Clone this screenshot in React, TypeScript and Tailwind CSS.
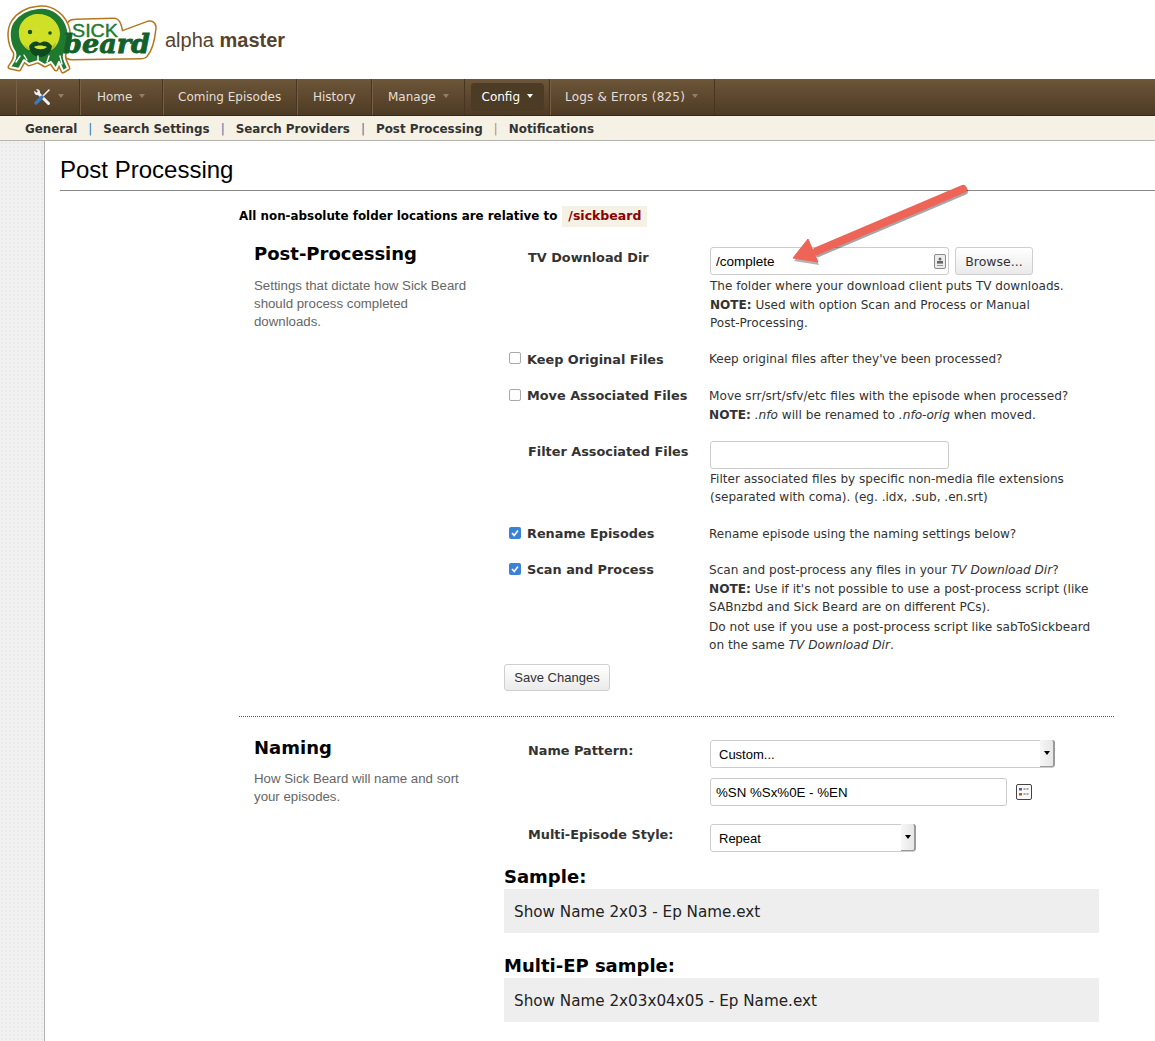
import React from "react";

const sans = "font-['DejaVu_Sans',Verdana,sans-serif]";

function Logo() {
  const head = "M38 6 C52 4 65 14 68 28 C70 38 68 46 65 50 C62 54 65 60 68 66 L63 69 L59 60 L56 67 L51 60 L45 63 L38 59 L29 62 L24 58 L19 67 L10 65 C13 60 17 56 15 50 C9 42 8 28 13 20 C19 11 28 7 38 6 Z";
  const band = "M66 30 C67 22 70 19 75 19 L114 18 C118 18 120 22 121 31 L148 21 C153 20 155 23 154 28 C153 38 150 48 146 53 C145 55 143 55 140 55 L72 56 C66 56 61 50 62 42 C62 36 64 33 66 30 Z";
  return (
    <svg width="160" height="76" viewBox="0 0 160 76" className="block shrink-0">
      <path d={band} fill="#fff" stroke="#b5771e" strokeWidth="5" strokeLinejoin="round" />
      <path d={band} fill="#fff" stroke="#fff" strokeWidth="2" strokeLinejoin="round" />
      <path d={head} fill="#fff" stroke="#b5771e" strokeWidth="5" strokeLinejoin="round" />
      <path d={head} fill="#1f7a30" stroke="#fff" strokeWidth="2" strokeLinejoin="round" />
      <path d="M19 32 C18 20 28 12 38 12 C50 12 59 20 60 31 C60 38 57 44 53 47 L27 47 C22 43 19 38 19 32 Z" fill="#cfe026" />
      <path d="M24 42 C30 50 50 50 56 40 C55 45 54 46 52 48 L28 48 C26 46 25 44 24 42 Z" fill="#a9c41e" />
      <circle cx="30" cy="30" r="2.2" fill="#14501f" />
      <circle cx="50" cy="31" r="1.8" fill="#14501f" />
      <path d="M29 44 C33 38 37 39 40 41 C43 39 48 38 52 44 C51 51 46 55 40 55 C34 55 30 51 29 44 Z" fill="#0f4a1e" />
      <path d="M34 45 C37 43 43 43 47 45 C44 48 37 48 34 45 Z" fill="#d8e63a" />
      <path d="M27 58 L24 53 M38 59 L38 54 M47 60 L49 54 M16 60 L20 54 M62 62 L60 54" stroke="#fff" strokeWidth="1.4" strokeLinecap="round" />
      <text x="72" y="35" fontFamily="'Liberation Sans',sans-serif" fontSize="18" fill="#1f7a30" stroke="#1f7a30" strokeWidth="0.4" textLength="46" lengthAdjust="spacingAndGlyphs">SICK</text>
      <text x="63" y="51" fontFamily="'DejaVu Serif',serif" fontStyle="italic" fontWeight="700" fontSize="26" fill="#14602b" stroke="#14602b" strokeWidth="0.8" textLength="87" lengthAdjust="spacingAndGlyphs">beard</text>
    </svg>
  );
}

function Tools() {
  return (
    <svg width="18" height="18" viewBox="0 0 18 18" className="block">
      <path d="M5 5 L15.5 15.5" stroke="#eef1f4" strokeWidth="3" strokeLinecap="round" />
      <path d="M1.5 2.8 L3.8 5 L5.2 3.8 L3 1.4 C5.5 0.4 7.8 2.4 7 5.2 L5.2 7 C2.6 7.8 0.6 5.4 1.5 2.8 Z" fill="#eef1f4" />
      <path d="M16 2 L10 8" stroke="#eef1f4" strokeWidth="1.6" strokeLinecap="round" />
      <path d="M9 9 L3 15" stroke="#3f78bb" strokeWidth="3.4" strokeLinecap="round" />
    </svg>
  );
}

function Caret({ light }: { light?: boolean }) {
  return <span className={`inline-block ml-[7px] mb-[3px] border-x-[3.5px] border-x-transparent border-t-[4px] ${light ? "border-t-white" : "border-t-[#8f7f6c]"}`} />;
}

function NavItem({ children, cls, caret }: { children: React.ReactNode; cls: string; caret?: boolean }) {
  return (
    <div className={`${cls} h-full flex items-center justify-start border-r border-r-[#463520] border-l border-l-[#765f43] shrink-0 text-[#e3dfd6]`}>
      {children}
      {caret && <Caret />}
    </div>
  );
}

function Sep({ c }: { c: string }) {
  return <span className={`mx-[11px] font-normal ${c}`}>|</span>;
}

function Stripe() {
  return <aside className="w-[45px] shrink-0 bg-[#f1f1f1] bg-[radial-gradient(#e9e9e9_1px,transparent_1px)] bg-[length:4px_4px] border-r border-r-[#b4b4b4]" />;
}

function Label({ children }: { children: React.ReactNode }) {
  return <div className="w-[206px] shrink-0 pl-[24px] font-bold text-[12.85px] text-[#333] leading-[19px]">{children}</div>;
}

function L19({ children }: { children: React.ReactNode }) {
  return <span className="block h-[19px] leading-[19px]">{children}</span>;
}

function L18({ children }: { children: React.ReactNode }) {
  return <span className="block h-[18px] leading-[18px]">{children}</span>;
}

function L20({ children }: { children: React.ReactNode }) {
  return <span className="block h-[20px] leading-[22px]">{children}</span>;
}

function CheckRow({ label, checked, children, cls, labelCls = "" }: { label: string; checked?: boolean; children: React.ReactNode; cls: string; labelCls?: string }) {
  return (
    <div className={`flex ${cls}`}>
      <div className="w-[205px] shrink-0 pl-[5px] flex items-start font-bold text-[12.85px] text-[#333] leading-[19px]">
        {checked ? (
          <span className="w-[12px] h-[12px] mt-[3px] rounded-[2px] bg-[#3b82d6] flex items-center justify-center">
            <svg width="10" height="10" viewBox="0 0 10 10"><path d="M2 5 L4.2 7.4 L8 2.6" stroke="#fff" strokeWidth="1.6" fill="none" /></svg>
          </span>
        ) : (
          <span className="w-[12px] h-[12px] mt-[3px] rounded-[2px] bg-white border border-[#a9a9a9]" />
        )}
        <span className={`ml-[6px] whitespace-nowrap ${labelCls}`}>{label}</span>
      </div>
      <div className="flex-1">{children}</div>
    </div>
  );
}

function TextBox({ value, cls }: { value: string; cls: string }) {
  return (
    <input
      readOnly
      value={value}
      className={`${cls} h-[28px] block bg-white border border-[#cccccc] rounded-[3px] px-[5px] text-black font-['Liberation_Sans',Arial,sans-serif] outline-none`}
    />
  );
}

function Select({ value, w }: { value: string; w: string }) {
  return (
    <div className={`relative ${w} h-[28px]`}>
      <select value={value} onChange={() => {}} className="appearance-none w-full h-full bg-white border border-[#cccccc] rounded-[3px] pl-[8px] pt-[2px] text-[13px] text-black font-['Liberation_Sans',Arial,sans-serif] outline-none">
        <option>{value}</option>
      </select>
      <span className="absolute right-0 top-0 w-[15px] h-[27px] bg-gradient-to-r from-[#f6f6f6] to-[#e6e6e6] border-r-2 border-b border-[#9a9a9a] rounded-r-[3px] flex items-center justify-center">
        <span className="border-x-[3.5px] border-x-transparent border-t-[4px] border-t-black" />
      </span>
    </div>
  );
}

function SectionHead({ title, lines, titleCls, pCls }: { title: string; lines: string[]; titleCls: string; pCls: string }) {
  return (
    <div className="w-[265px] shrink-0 pl-[15px]">
      <h2 className={`font-bold text-[18px] text-black leading-[22px] ${titleCls}`}>{title}</h2>
      <p className={`text-[13.25px] leading-[18px] text-[#666] font-['Liberation_Sans',Arial,sans-serif] whitespace-nowrap ${pCls}`}>
        {lines.map((l) => <span key={l} className="block">{l}</span>)}
      </p>
    </div>
  );
}

function Sample({ heading, text }: { heading: string; text: string }) {
  return (
    <div>
      <h3 className="font-bold text-[18px] leading-[22px] text-black">{heading}</h3>
      <div className="mt-[1px] w-[595px] h-[44px] bg-[#eeeeee] pl-[10px] pt-[3px] flex items-center text-[15.2px] text-[#222]">{text}</div>
    </div>
  );
}

export default function App() {
  const desc = "pt-[1px] text-[12.05px] text-[#333] whitespace-nowrap";
  const descWide = "pt-[1px] text-[12.13px] text-[#333] whitespace-nowrap";
  return (
    <div className={`relative w-[1155px] h-[1041px] overflow-hidden bg-white ${sans}`}>
      <header className="h-[79px] flex items-center">
        <Logo />
        <div className="ml-[5px] mt-[1px] text-[20px] text-[#57432c] font-['Liberation_Sans',Arial,sans-serif]">
          alpha <b className="font-bold">master</b>
        </div>
      </header>

      <nav className="h-[37px] pl-[16px] flex items-center bg-gradient-to-b from-[#6d5639] to-[#4e3b24] border-b border-b-[#33261a] text-[12px]">
        <NavItem cls="w-[64px] pl-[16px]" caret><Tools /></NavItem>
        <NavItem cls="w-[83px] pl-[16px]" caret>Home</NavItem>
        <NavItem cls="w-[134px] pl-[14px]">Coming Episodes</NavItem>
        <NavItem cls="w-[75px] pl-[15px]">History</NavItem>
        <NavItem cls="w-[93px] pl-[15px]" caret>Manage</NavItem>
        <div className="w-[85px] h-full flex items-center justify-center border-r border-r-[#463520] shrink-0">
          <div className="w-[73px] h-[28px] rounded-[4px] bg-[#4c3b25] flex items-center pl-[11px] text-white">
            Config<Caret light />
          </div>
        </div>
        <NavItem cls="w-[165px] pl-[14px] tracking-[0.2px]" caret>Logs &amp; Errors (825)</NavItem>
      </nav>

      <div className="h-[25px] pl-[25px] pt-[3px] bg-[#f5f1e4] border-b border-b-[#b4b4b4] flex items-center font-bold text-[11.9px] text-[#333]">
        General<Sep c="text-[#2f78b0]" />Search Settings<Sep c="text-[#2f78b0]" />Search Providers<Sep c="text-[#2f78b0]" />Post Processing<Sep c="text-[#c98a3a]" />Notifications
      </div>

      <div className="flex h-[900px]">
        <Stripe />
        <main className="flex-1 pl-[15px]">
          <h1 className="h-[50px] pt-[13px] border-b border-b-[#888] text-[24px] leading-[32px] text-black font-['Liberation_Sans',Arial,sans-serif]">Post Processing</h1>

          <div className="ml-[179px] w-[875px]">
            <div className="mt-[14px] h-[22px] flex items-center font-bold text-[11.9px] text-black">
              <span className="mt-[1px]">All non-absolute folder locations are relative to</span>
              <span className="ml-[5px] px-[6px] h-[21px] flex items-center bg-[#f5f1e4] text-[#8b0000] text-[12.5px]">/sickbeard</span>
            </div>

            <section className="flex pt-[20px] border-b border-dotted border-b-[#555] pb-[25px]">
              <SectionHead title="Post-Processing" titleCls="mt-[-4px]" pCls="mt-[12px]" lines={["Settings that dictate how Sick Beard", "should process completed", "downloads."]} />
              <div className="flex-1">
                <div className="flex mb-[17px]">
                  <Label><span className="block mt-[1px]">TV Download Dir</span></Label>
                  <div>
                    <div className="flex items-center">
                      <div className="relative">
                        <TextBox value="/complete" cls="w-[239px] text-[13.5px]" />
                        <svg width="12" height="15" viewBox="0 0 12 15" className="absolute right-[3px] top-[7px]">
                          <rect x="0.5" y="0.5" width="11" height="14" rx="1.5" fill="#ececec" stroke="#8a8a8a" />
                          <circle cx="6" cy="5" r="1.5" fill="#666" />
                          <rect x="3" y="7" width="6" height="2.6" fill="#666" />
                          <rect x="3" y="11" width="6" height="1" fill="#999" />
                        </svg>
                      </div>
                      <button className="ml-[6px] h-[28px] w-[78px] pt-[2px] border border-[#cfcfcf] rounded-[3px] bg-gradient-to-b from-white to-[#eaeaea] text-[12.5px] text-[#333]">Browse...</button>
                    </div>
                    <p className={`${desc} mt-[1px]`}>
                      <L19>The folder where your download client puts TV downloads.</L19>
                      <L18><b>NOTE:</b> Used with option Scan and Process or Manual</L18>
                      <L18>Post-Processing.</L18>
                    </p>
                  </div>
                </div>

                <CheckRow label="Keep Original Files" cls="mb-[17px]" labelCls="mt-[1px]">
                  <p className={desc}><L19>Keep original files after they've been processed?</L19></p>
                </CheckRow>
                <CheckRow label="Move Associated Files" cls="mb-[17px]">
                  <p className={descWide}>
                    <L19>Move srr/srt/sfv/etc files with the episode when processed?</L19>
                    <L18><b>NOTE:</b> <i>.nfo</i> will be renamed to <i>.nfo-orig</i> when moved.</L18>
                  </p>
                </CheckRow>

                <div className="flex mb-[18px]">
                  <Label><span className="block mt-[1px] whitespace-nowrap">Filter Associated Files</span></Label>
                  <div>
                    <TextBox value="" cls="w-[239px] text-[13px]" />
                    <p className={desc}>
                      <L18>Filter associated files by specific non-media file extensions</L18>
                      <L18>(separated with coma). (eg. .idx, .sub, .en.srt)</L18>
                    </p>
                  </div>
                </div>

                <CheckRow label="Rename Episodes" checked cls="mb-[16px]">
                  <p className={desc}><L19>Rename episode using the naming settings below?</L19></p>
                </CheckRow>
                <CheckRow label="Scan and Process" checked cls="">
                  <p className={descWide}>
                    <L19>Scan and post-process any files in your <i>TV Download Dir</i>?</L19>
                    <L18><b>NOTE:</b> Use if it's not possible to use a post-process script (like</L18>
                    <L18>SABnzbd and Sick Beard are on different PCs).</L18>
                    <L20>Do not use if you use a post-process script like sabToSickbeard</L20>
                    <L18>on the same <i>TV Download Dir</i>.</L18>
                  </p>
                </CheckRow>

                <button className="mt-[10px] block h-[27px] w-[106px] pt-[1px] border border-[#cfcfcf] rounded-[3px] bg-gradient-to-b from-white to-[#eaeaea] text-[13px] text-[#333] font-['Liberation_Sans',Arial,sans-serif]">Save Changes</button>
              </div>
            </section>

            <section className="flex pt-[23px]">
              <SectionHead title="Naming" titleCls="mt-[-3px]" pCls="mt-[11px]" lines={["How Sick Beard will name and sort", "your episodes."]} />
              <div className="flex-1">
                <div className="flex">
                  <Label><span className="block mt-[1px]">Name Pattern:</span></Label>
                  <div>
                    <Select value="Custom..." w="w-[345px]" />
                    <div className="flex items-center mt-[10px]">
                      <TextBox value="%SN %Sx%0E - %EN" cls="w-[297px] text-[13.3px] pt-[1px]" />
                      <svg width="16" height="16" viewBox="0 0 16 16" className="ml-[9px]">
                        <rect x="0.5" y="0.5" width="15" height="15" rx="1.5" fill="#f8f8f8" stroke="#444" />
                        <rect x="3" y="4" width="3" height="2.5" fill="#5b5b9a" />
                        <rect x="3" y="9" width="3" height="2.5" fill="#b5553a" />
                        <path d="M7.5 5 H13 M7.5 10 H13" stroke="#555" strokeWidth="1" strokeDasharray="2 1" />
                      </svg>
                    </div>
                  </div>
                </div>
                <div className="flex mt-[18px]">
                  <Label><span className="block mt-[1px]">Multi-Episode Style:</span></Label>
                  <Select value="Repeat" w="w-[206px]" />
                </div>
                <div className="mt-[14px]"><Sample heading="Sample:" text="Show Name 2x03 - Ep Name.ext" /></div>
                <div className="mt-[22px]"><Sample heading="Multi-EP sample:" text="Show Name 2x03x04x05 - Ep Name.ext" /></div>
              </div>
            </section>
          </div>
        </main>
      </div>

      <svg width="200" height="100" viewBox="0 0 200 100" className="absolute left-[780px] top-[175px] pointer-events-none">
        <path d="M183 14 L37 76" stroke="#000" strokeOpacity="0.35" strokeWidth="8" strokeLinecap="round" transform="translate(1 2)" />
        <path d="M13 84 L28 65 L38 88 Z" fill="#000" fillOpacity="0.3" transform="translate(1 2)" />
        <path d="M183 14 L37 76" stroke="#ee6558" strokeWidth="8" strokeLinecap="round" />
        <path d="M13 83 L28 64 L38 87 Z" fill="#ee6558" stroke="#ee6558" strokeLinejoin="round" />
      </svg>
    </div>
  );
}
